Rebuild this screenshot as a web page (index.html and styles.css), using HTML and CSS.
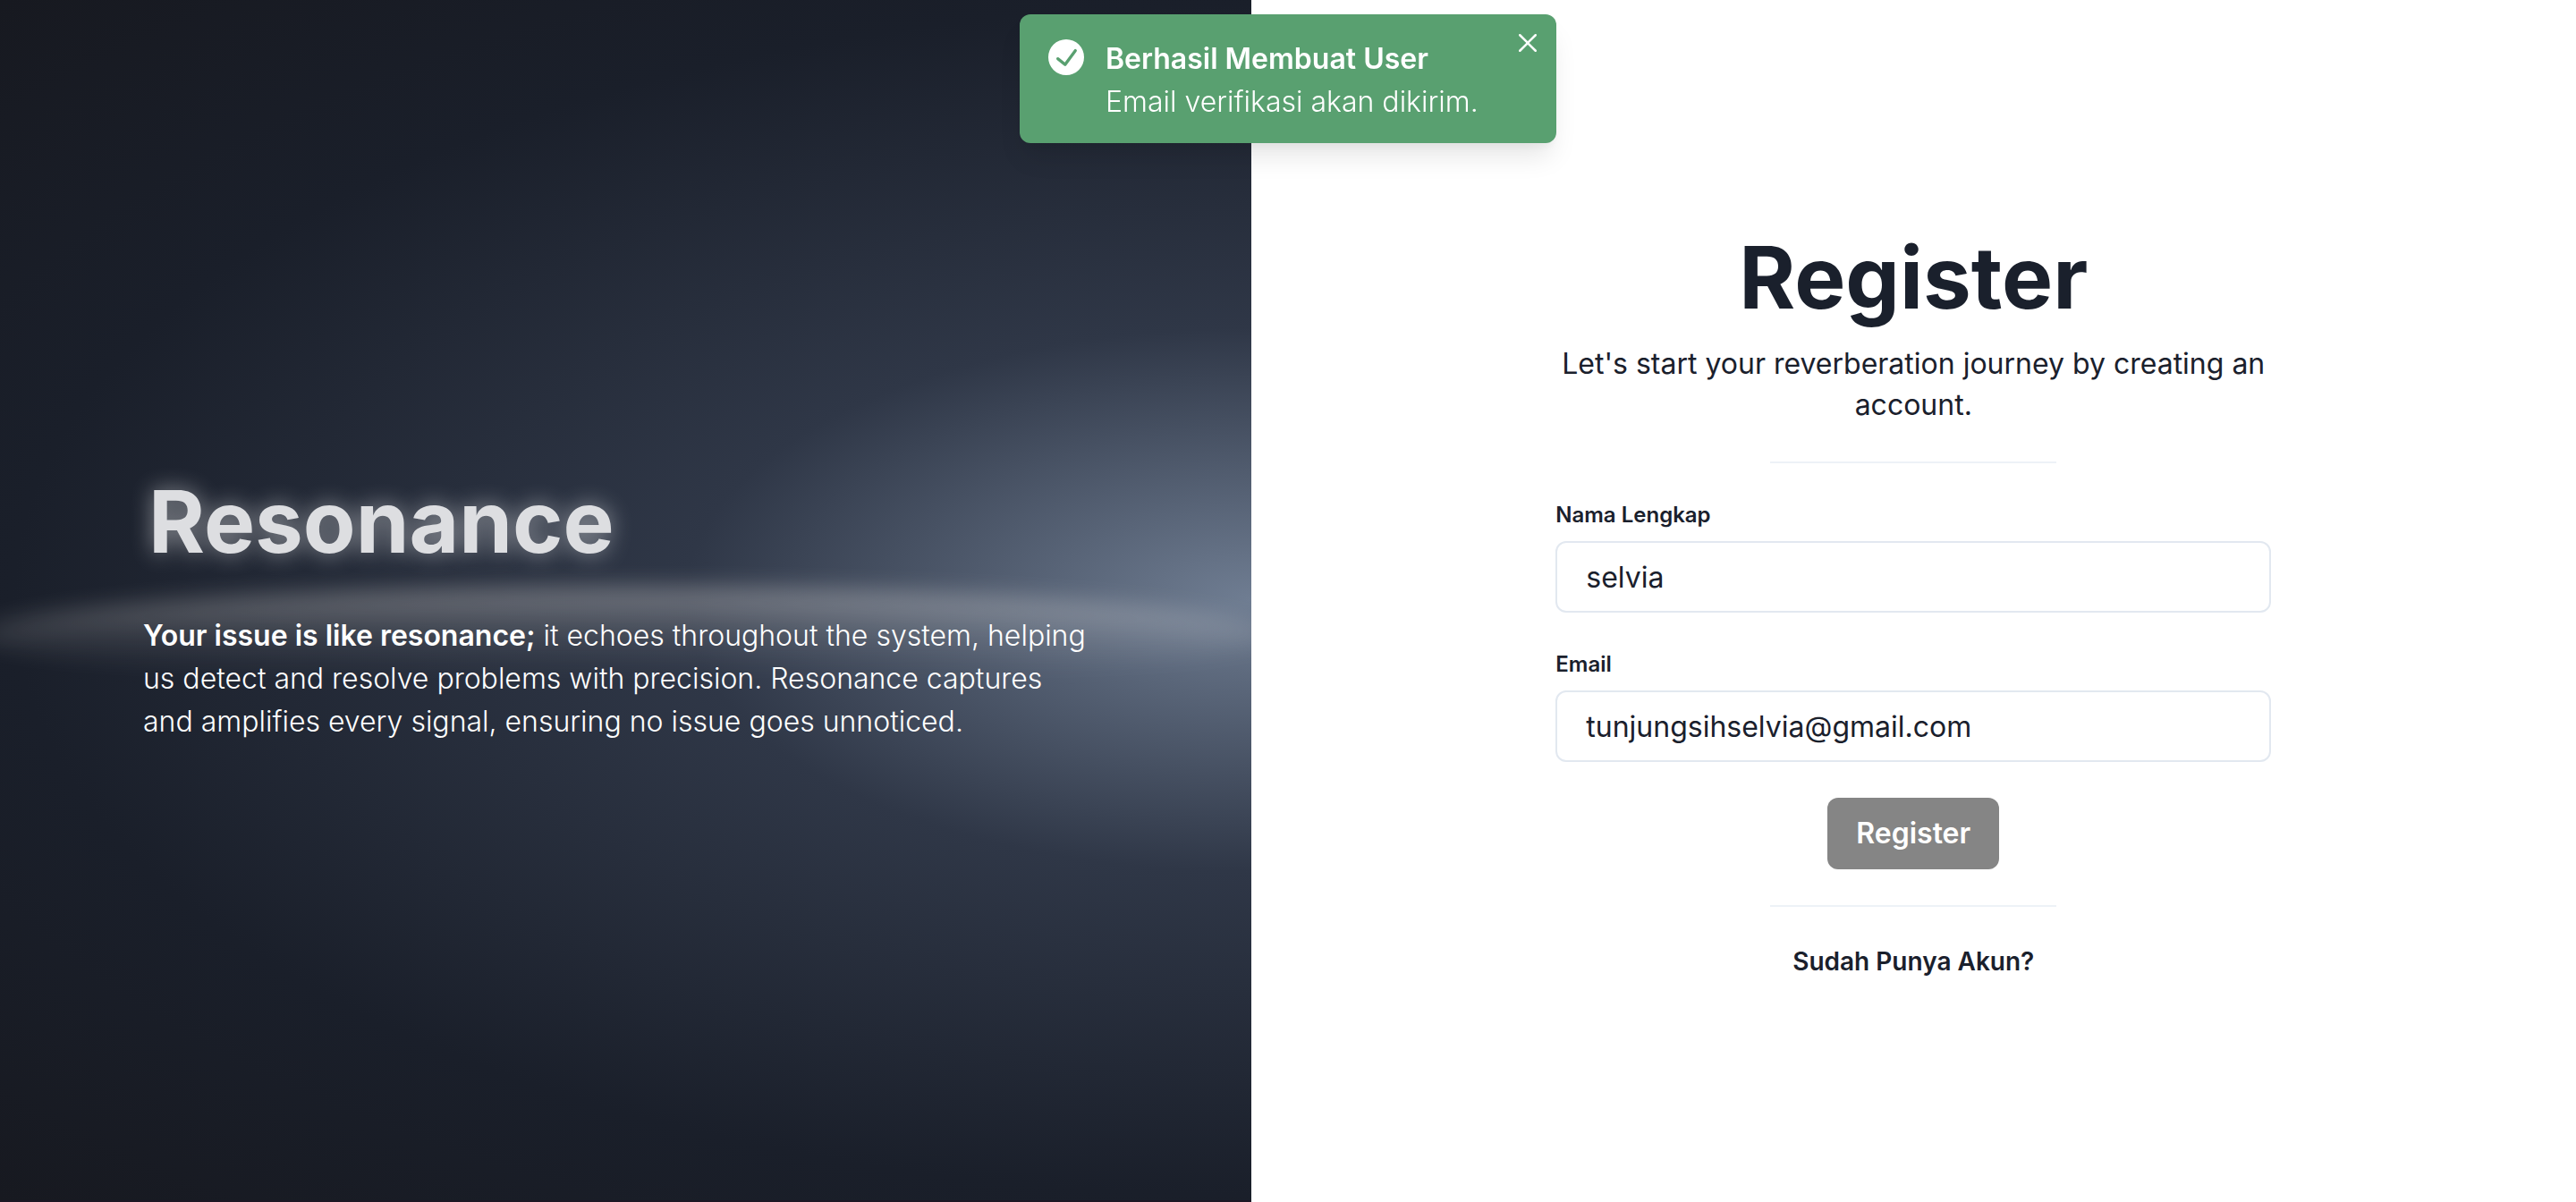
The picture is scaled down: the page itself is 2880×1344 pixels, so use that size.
FILE: index.html
```html
<!DOCTYPE html>
<html lang="id">
<head>
<meta charset="utf-8">
<meta name="viewport" content="width=device-width, initial-scale=1">
<title>Register - Resonance</title>
<link rel="stylesheet" href="styles.css">
</head>
<body>
<main class="page">
  <section class="hero">
    <div class="hero-glow"></div>
    <div class="hero-content">
      <h1 class="hero-title">Resonance</h1>
      <p class="hero-text"><strong>Your issue is like resonance;</strong> it echoes throughout the system, helping us detect and resolve problems with precision. Resonance captures and amplifies every signal, ensuring no issue goes unnoticed.</p>
    </div>
  </section>
  <section class="panel">
    <form class="form">
      <header class="form-header">
        <h2 class="form-title">Register</h2>
        <p class="form-subtitle">Let's start your reverberation journey by creating an account.</p>
      </header>
      <hr class="divider">
      <div class="field">
        <label class="label" for="name">Nama Lengkap</label>
        <input class="input" id="name" type="text" value="selvia">
      </div>
      <div class="field">
        <label class="label" for="email">Email</label>
        <input class="input" id="email" type="email" value="tunjungsihselvia@gmail.com">
      </div>
      <button class="submit" type="submit">Register</button>
      <hr class="divider">
      <a class="login-link" href="#login">Sudah Punya Akun?</a>
    </form>
  </section>
</main>
<div class="toast" role="status">
  <svg class="toast-icon" viewBox="0 0 24 24" aria-hidden="true"><path fill="currentColor" d="M12,0A12,12,0,1,0,24,12,12.014,12.014,0,0,0,12,0Zm6.927,8.2-6.845,9.289a1.011,1.011,0,0,1-1.43.188L5.764,13.769a1,1,0,1,1,1.25-1.562l4.076,3.261,6.227-8.451A1,1,0,1,1,18.927,8.2Z"/></svg>
  <div class="toast-body">
    <div class="toast-title">Berhasil Membuat User</div>
    <div class="toast-text">Email verifikasi akan dikirim.</div>
  </div>
  <button class="toast-close" type="button" aria-label="Close"><svg viewBox="0 0 24 24" aria-hidden="true"><path fill="currentColor" d="M.439,21.44a1.5,1.5,0,0,0,2.122,2.121L11.823,14.3a.25.25,0,0,1,.354,0l9.262,9.263a1.5,1.5,0,1,0,2.122-2.121L14.3,12.177a.25.25,0,0,1,0-.354l9.263-9.262A1.5,1.5,0,0,0,21.439.44L12.177,9.7a.25.25,0,0,1-.354,0L2.561.44A1.5,1.5,0,0,0,.439,2.561L9.7,11.823a.25.25,0,0,1,0,.354Z"/></svg></button>
</div>
</body>
</html>
```
FILE: styles.css
```css
* {
  box-sizing: border-box;
}

body {
  margin: 0;
  font-family: "Inter", "Liberation Sans", sans-serif;
  font-size: 32px;
  line-height: 48px;
  color: #1a202c;
  background: #fff;
}

h1, h2, p {
  margin: 0;
}

.page {
  display: flex;
  min-height: 100vh;
}

.hero {
  position: relative;
  flex: 0 0 48.56%;
  display: flex;
  flex-direction: column;
  justify-content: center;
  padding: 14px 160px 0;
  overflow: hidden;
  color: #fff;
  background: radial-gradient(at 100% 50%, #6f7d92 0%, #2f3747 32%, #1a1f2a 70%, #171920 100%);
  border-bottom: 2px solid #1d1724;
}

.hero-glow {
  position: absolute;
  top: 656px;
  left: -24px;
  right: -24px;
  height: 108px;
  border-radius: 50%;
  background: linear-gradient(rgba(255, 250, 245, 0.34), rgba(255, 250, 245, 0.1) 50%, rgba(255, 250, 245, 0) 90%);
  filter: blur(12px);
}

.hero-content {
  position: relative;
  display: flex;
  flex-direction: column;
  gap: 46px;
}

.hero-title {
  padding-left: 6px;
  font-size: 96px;
  line-height: 116px;
  font-weight: 700;
  color: #dddee1;
  text-shadow: 0 0 24px rgba(255, 255, 255, 0.5);
}

.hero-text {
  max-width: 1060px;
  font-weight: 300;
}

.hero-text strong {
  font-weight: 600;
}

.panel {
  flex: 1;
  display: flex;
  align-items: center;
  justify-content: center;
  padding: 4px 40px 0;
}

.form {
  display: flex;
  flex-direction: column;
  align-items: center;
  gap: 40px;
  width: 100%;
  max-width: 800px;
}

.form-header {
  display: flex;
  flex-direction: column;
  gap: 16px;
  text-align: center;
}

.form-title {
  font-size: 96px;
  line-height: 116px;
  font-weight: 700;
}

.form-subtitle {
  line-height: 46px;
}

.divider {
  width: 320px;
  height: 2px;
  margin: 0;
  border: 0;
  background: #edf2f7;
}

.field {
  display: flex;
  flex-direction: column;
  gap: 12px;
  width: 100%;
}

.label {
  font-size: 24px;
  line-height: 35px;
  font-weight: 600;
}

.input {
  width: 100%;
  height: 80px;
  padding: 0 32px;
  font: inherit;
  color: inherit;
  background: #fff;
  border: 2px solid #e2e8f0;
  border-radius: 12px;
}

.submit {
  height: 80px;
  padding: 0 32px;
  font: inherit;
  font-weight: 600;
  color: #fff;
  background: #858585;
  border: 0;
  border-radius: 12px;
}

.login-link {
  font-size: 28px;
  line-height: 42px;
  font-weight: 600;
  color: inherit;
  text-decoration: none;
}

.toast {
  position: fixed;
  top: 16px;
  left: 50%;
  transform: translateX(-50%);
  display: flex;
  gap: 24px;
  width: 600px;
  padding: 24px 32px;
  color: #fff;
  background: #59a070;
  border-radius: 12px;
  box-shadow: 0 20px 30px -6px rgba(0, 0, 0, 0.1), 0 8px 12px -4px rgba(0, 0, 0, 0.05);
}

.toast-icon {
  flex: none;
  width: 40px;
  height: 40px;
  margin-top: 4px;
}

.toast-body {
  padding-top: 2px;
  margin-bottom: -2px;
}

.toast-title {
  font-weight: 600;
}

.toast-text {
  font-weight: 300;
}

.toast-close {
  position: absolute;
  top: 8px;
  right: 8px;
  display: flex;
  align-items: center;
  justify-content: center;
  width: 48px;
  height: 48px;
  padding: 0;
  color: inherit;
  background: none;
  border: 0;
}

.toast-close svg {
  width: 20px;
  height: 20px;
}
```
